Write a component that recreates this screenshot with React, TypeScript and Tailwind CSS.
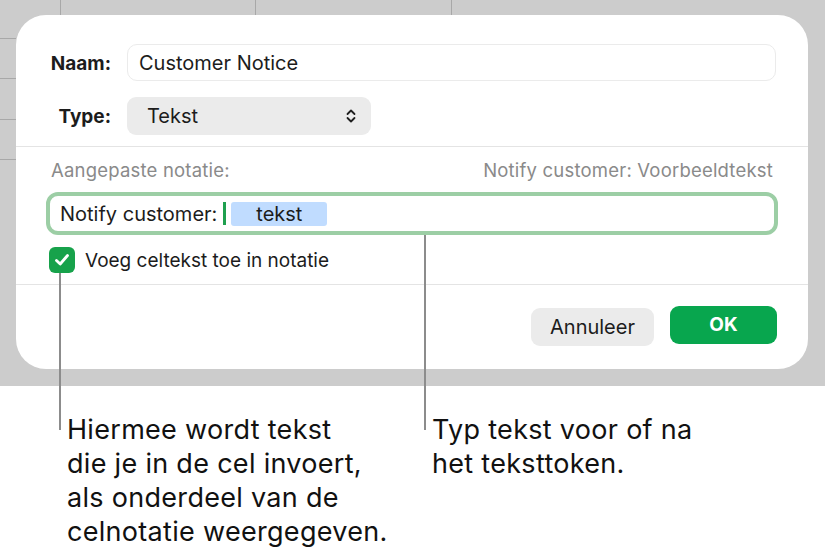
import React from "react";

const font = { fontFamily: "Inter, 'Noto Sans', sans-serif" };

function Chevrons() {
  return (
    <svg width="10" height="16" viewBox="0 0 10 16" fill="none">
      <path d="M1.5 6 L5 2.5 L8.5 6" stroke="#1f1f1f" strokeWidth="1.8" strokeLinecap="round" strokeLinejoin="round" />
      <path d="M1.5 10 L5 13.5 L8.5 10" stroke="#1f1f1f" strokeWidth="1.8" strokeLinecap="round" strokeLinejoin="round" />
    </svg>
  );
}

function CheckBox() {
  return (
    <div className="w-[26px] h-[26px] rounded-[6px] bg-[#17a24b] flex items-center justify-center">
      <svg width="18" height="18" viewBox="0 0 18 18" fill="none">
        <path d="M3.5 9.5 L7.2 13 L14.5 4.5" stroke="white" strokeWidth="2.8" strokeLinecap="round" strokeLinejoin="round" />
      </svg>
    </div>
  );
}

export default function App() {
  const vLines = [60, 255, 451];
  const hLines = [38, 78, 119, 159];

  return (
    <div className="relative w-[825px] h-[553px] bg-white overflow-hidden text-[#1c1c1c]" style={font}>
      {/* Spreadsheet backdrop */}
      <div className="relative h-[386px] bg-[#cccccc] pt-[15px] pl-[16px]">
        {vLines.map((x) => (
          <div key={x} className="absolute top-0 h-[15px] w-px bg-[#a8a8a8]" style={{ left: x }} />
        ))}
        {hLines.map((y) => (
          <div key={y} className="absolute left-0 w-[16px] h-px bg-[#a8a8a8]" style={{ top: y }} />
        ))}

        {/* Dialog */}
        <div className="relative w-[792px] h-[354px] bg-white rounded-[30px] flex flex-col">
          {/* Name & type */}
          <div className="pt-[29px] pb-[11px] pr-[32px] grid grid-cols-[95px_1fr] gap-x-4 gap-y-4 items-center">
            <span className="text-right text-[19px] font-bold pt-[3px]">Naam:</span>
            <div className="h-[37px] border border-[#ebebeb] rounded-[10px] flex items-center pl-[11px] text-[20px]">
              Customer Notice
            </div>
            <span className="text-right text-[19px] font-bold pt-[2px]">Type:</span>
            <div className="w-[244px] h-[38px] bg-[#ebebeb] rounded-[9px] flex items-center justify-between pl-[20px] pr-[15px] text-[20px]">
              Tekst
              <Chevrons />
            </div>
          </div>
          <div className="h-px bg-[#e4e4e4]" />

          {/* Custom format */}
          <div className="px-[30px] pt-[12px] pb-[11px] flex flex-col">
            <div className="h-[24px] px-[5px] flex items-center justify-between text-[18.5px] tracking-[0.2px] text-[#8a8a8a]">
              <span>Aangepaste notatie:</span>
              <span>Notify customer: Voorbeeldtekst</span>
            </div>
            <div className="mt-[9px] h-[43px] border-[4px] border-[#9ccea5] rounded-[12px] flex items-center pl-[10px] text-[20px]">
              <span>Notify customer:</span>
              <span className="ml-[6px] w-[3px] h-[23px] bg-[#1fa04f]" />
              <span className="ml-[5px] w-[96px] h-[24px] rounded-[3px] bg-[#c0dcff] flex items-center justify-center">
                tekst
              </span>
            </div>
            <div className="mt-[12px] h-[26px] flex items-center gap-[10px] pl-[3px] text-[19px] leading-none">
              <CheckBox />
              <span>Voeg celtekst toe in notatie</span>
            </div>
          </div>
          <div className="h-px bg-[#e4e4e4]" />

          {/* Buttons */}
          <div className="pt-[21px] pr-[31px] flex justify-end items-start gap-4">
            <button className="mt-[2px] w-[123px] h-[38px] rounded-[9px] bg-[#ebebeb] text-[20px]">Annuleer</button>
            <button className="w-[107px] h-[38px] rounded-[9px] bg-[#08a64e] text-white text-[19px] font-bold">OK</button>
          </div>
        </div>
      </div>

      {/* Callout lines */}
      <div className="absolute left-[59px] top-[273px] w-[2px] h-[157px] bg-[#8c8c8c]" />
      <div className="absolute left-[424px] top-[235px] w-[2px] h-[195px] bg-[#8c8c8c]" />

      {/* Callout texts */}
      <div className="absolute left-[67px] top-[413px] text-[27px] leading-[34px] tracking-[0.3px] text-[#111]">
        Hiermee wordt tekst
        <br />
        die je in de cel invoert,
        <br />
        als onderdeel van de
        <br />
        celnotatie weergegeven.
      </div>
      <div className="absolute left-[432px] top-[413px] text-[27px] leading-[34px] tracking-[0.3px] text-[#111]">
        Typ tekst voor of na
        <br />
        het teksttoken.
      </div>
    </div>
  );
}
